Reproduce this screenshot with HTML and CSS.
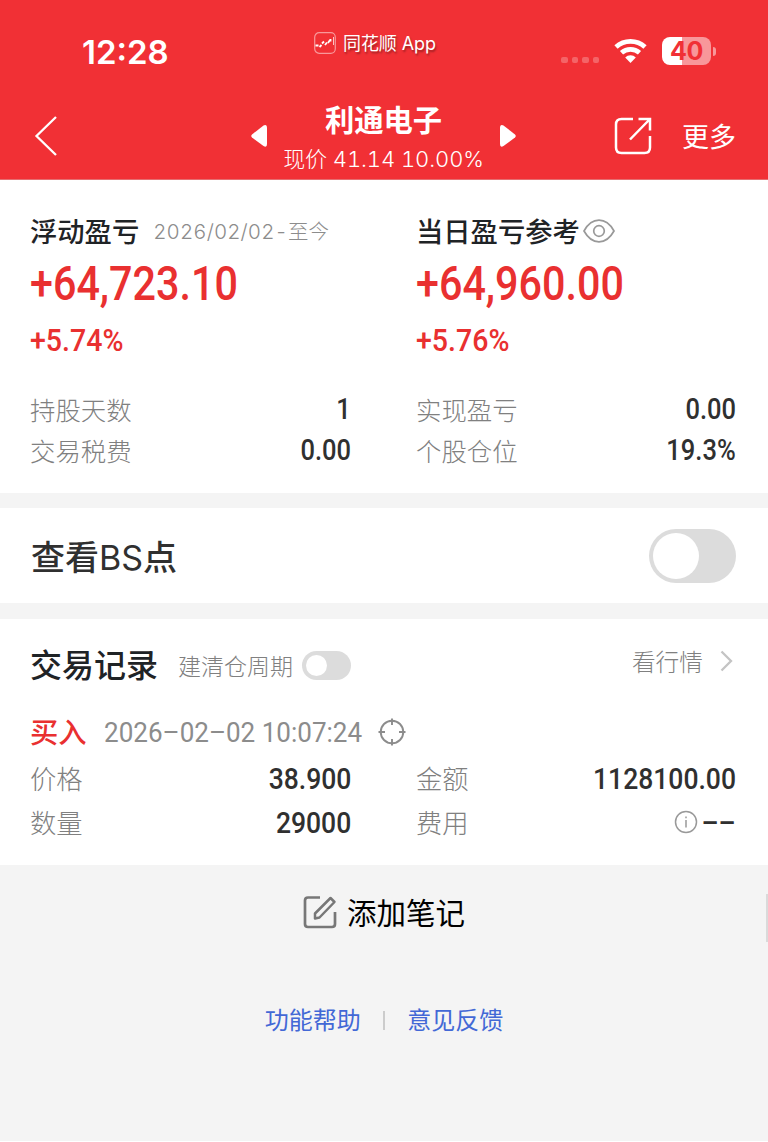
FILE: index.html
```html
<!DOCTYPE html>
<html lang="zh-CN">
<head>
  <meta charset="UTF-8">
  <meta name="viewport" content="width=device-width, initial-scale=1.0">
  <title>利通电子</title>
  <link rel="stylesheet" href="styles.css">
</head>
<body>
  <header class="header">
    <div class="status-bar">
      <span class="time">12:28</span>
      <div class="app-tag">
        <svg class="app-logo" width="22" height="22" viewBox="0 0 22 22" fill="none">
          <rect x="0.7" y="0.7" width="20.6" height="20.6" rx="4.5" stroke="#fff" stroke-opacity="0.5" stroke-width="1.2"/>
          <path d="M1.5 13.5h3M5.5 15l2-2M8 11.5l2-2M11 13l2-2.5M14 11l2-3M16.5 9.5V7" stroke="#fff" stroke-width="1.8"/>
          <path d="M19.5 5v8" stroke="#fff" stroke-opacity="0.7"/>
        </svg>
        <span>同花顺 App</span>
      </div>
      <div class="status-icons">
        <div class="signal"><i></i><i></i><i></i><i></i></div>
        <svg class="wifi" width="33" height="26" viewBox="0 0 33 26" fill="none" stroke="#fff" stroke-width="4.8">
          <path d="M2 10a21.5 21.5 0 0 1 29 0"/>
          <path d="M7.5 15.700a13.600 13.600 0 0 1 18 0"/>
          <path d="M16.500 26l-5.300-5.500a7.500 7.500 0 0 1 10.600 0z" fill="#fff" stroke="none"/>
        </svg>
        <div class="battery"><span>40</span></div>
      </div>
    </div>
    <nav class="nav">
      <svg class="back" width="24" height="42" viewBox="0 0 24 42" fill="none" stroke="#fff" stroke-width="2.3">
        <path d="M22 2L2.5 21L22 40"/>
      </svg>
      <div class="stock">
        <svg width="17" height="24" viewBox="0 0 17 24" fill="#fff">
          <path d="M1 10.5L12.5 1.5Q16 0 16 4V20Q16 24 12.5 22L1 13.5Q-0.5 12 1 10.5z"/>
        </svg>
        <div class="stock-info">
          <h1>利通电子</h1>
          <p>现价 41.14 10.00%</p>
        </div>
        <svg width="17" height="24" viewBox="0 0 17 24" fill="#fff">
          <path d="M16 10.5L4.500 1.500Q1 0 1 4V20Q1 24 4.500 22L16 13.500Q17.500 12 16 10.500z"/>
        </svg>
      </div>
      <svg class="share" width="38" height="38" viewBox="0 0 38 38" fill="none" stroke="#fff" stroke-width="2.5">
        <path d="M19 2H7.500Q2 2 2 7.500V30.500Q2 36 7.500 36H30.500Q36 36 36 30.500V19"/>
        <path d="M24.500 2H36V13.500M36 2L16 22.500"/>
      </svg>
      <span class="more">更多</span>
    </nav>
  </header>

  <section class="card summary">
    <div class="col">
      <div class="title">浮动盈亏<span class="period">2026/02/02-至今</span></div>
      <div class="amount"><span class="din">+64,723.10</span></div>
      <div class="rate"><span class="din">+5.74%</span></div>
      <div class="row"><span class="label">持股天数</span><span class="value">1</span></div>
      <div class="row"><span class="label">交易税费</span><span class="value">0.00</span></div>
    </div>
    <div class="col">
      <div class="title">当日盈亏参考
        <svg class="eye" width="32" height="24" viewBox="0 0 32 24" fill="none" stroke="#999" stroke-width="1.7">
          <path d="M1 12Q7 1.200 16 1.200T31 12Q25 22.800 16 22.800T1 12z"/>
          <circle cx="16" cy="12" r="5.300"/>
        </svg>
      </div>
      <div class="amount"><span class="din">+64,960.00</span></div>
      <div class="rate"><span class="din">+5.76%</span></div>
      <div class="row"><span class="label">实现盈亏</span><span class="value">0.00</span></div>
      <div class="row"><span class="label">个股仓位</span><span class="value">19.3%</span></div>
    </div>
  </section>

  <section class="card bs">
    <h2>查看<span class="latin">BS</span>点</h2>
    <div class="switch"></div>
  </section>

  <section class="card records">
    <div class="records-head">
      <h2>交易记录</h2>
      <span class="cycle">建清仓周期</span>
      <div class="switch small"></div>
      <div class="quote">
        <span>看行情</span>
        <svg width="13" height="22" viewBox="0 0 13 22" fill="none" stroke="#c4c4c4" stroke-width="2.3">
          <path d="M1.500 1.500L11 11L1.500 20.500"/>
        </svg>
      </div>
    </div>
    <div class="trade">
      <span class="buy">买入</span>
      <span class="datetime">2026–02–02 10:07:24</span>
      <svg width="28" height="28" viewBox="0 0 28 28" fill="none" stroke="#8c8c8c" stroke-width="1.900">
        <circle cx="14" cy="14" r="11.300"/>
        <path d="M14 0.500V7M14 21V27.500M0.500 14H7M21 14H27.500"/>
      </svg>
    </div>
    <div class="details">
      <div class="row"><span class="label">价格</span><span class="value">38.900</span></div>
      <div class="row"><span class="label">金额</span><span class="value">1128100.00</span></div>
      <div class="row"><span class="label">数量</span><span class="value">29000</span></div>
      <div class="row">
        <span class="label">费用</span>
        <svg class="info" width="24" height="24" viewBox="0 0 24 24" fill="none" stroke="#999" stroke-width="1.500">
          <circle cx="12" cy="12" r="10.500"/>
          <path d="M12 10V17.500M12 6.500V8.300"/>
        </svg>
        <span class="value">––</span>
      </div>
    </div>
  </section>

  <div class="note">
    <svg width="34" height="34" viewBox="0 0 34 34" fill="none" stroke="#777" stroke-width="2.700">
      <path d="M17 2.500H5Q2 2.500 2 5.500V29Q2 32 5 32H29Q32 32 32 29V17"/>
      <path d="M12 23.500V18.500L27.500 3L31.500 7L16.500 22.500z" stroke-linejoin="round" stroke-width="2.500"/>
    </svg>
    <span>添加笔记</span>
  </div>

  <footer class="links">
    <a>功能帮助</a>
    <i></i>
    <a>意见反馈</a>
  </footer>

  <div class="scrollbar"></div>
</body>
</html>
```

FILE: styles.css
```css
/* Global Styles */
* {
  box-sizing: border-box;
  margin: 0;
  padding: 0;
}

body {
  width: 768px;
  height: 1141px;
  font-family: Inter, 'Noto Sans CJK SC', sans-serif;
  background: linear-gradient(#f4f4f4, #f4f4f4) 0 0 / 100% 1141px no-repeat #fff;
  color: #303030;
  white-space: nowrap;
  overflow: hidden;
}

svg {
  display: block;
  flex: none;
}

h1,
h2 {
  font-weight: 500;
}

/* Header */
.header {
  height: 180px;
  background-color: #f13035;
  border-bottom: 1px solid #e56e70;
  color: #fff;
}

.status-bar {
  display: flex;
  height: 92px;
  padding-left: 82px;
}

.time {
  width: 232px;
  padding-top: 32px;
  font-size: 33px;
  font-weight: 600;
  line-height: 40px;
}

.app-tag {
  display: flex;
  width: 247px;
  padding-top: 32px;
  gap: 7px;
  font-size: 18px;
  line-height: 24px;
  letter-spacing: -0.1px;
  text-shadow: 1px 2px 2px rgba(0, 0, 0, 0.35);
}

.status-icons {
  display: flex;
  padding-top: 37px;
}

.signal {
  display: flex;
  gap: 4px;
  padding-top: 20px;
  width: 53px;
}

.signal i {
  width: 6.5px;
  height: 6px;
  border-radius: 2px;
  background-color: rgba(255, 255, 255, 0.25);
}

.battery {
  position: relative;
  width: 49px;
  height: 28px;
  margin-left: 15px;
  border-radius: 8px;
  background: linear-gradient(90deg, #fff 20px, #f8979a 20px);
  color: #f13035;
  font-size: 25px;
  font-weight: 700;
  line-height: 29px;
  letter-spacing: -0.5px;
  text-align: center;
}

.battery::after {
  content: '';
  position: absolute;
  top: 10px;
  right: -5px;
  width: 3px;
  height: 9px;
  border-radius: 0 4px 4px 0;
  background-color: #f8979a;
}

.nav {
  display: flex;
  align-items: center;
  height: 87px;
  padding-left: 34px;
}

.stock {
  display: flex;
  justify-content: space-between;
  align-items: center;
  width: 265px;
  margin-left: 193px;
}

.stock-info {
  padding-top: 6px;
  text-align: center;
}

.stock-info h1 {
  font-size: 29.3px;
  font-weight: 700;
  line-height: 40px;
}

.stock-info p {
  font-size: 22px;
  font-weight: 300;
  font-variant-numeric: tabular-nums;
  line-height: 36px;
  letter-spacing: -0.1px;
}

.share {
  margin-left: 98px;
}

.more {
  margin-left: 30px;
  font-size: 27px;
}

/* White cards */
.card {
  background-color: #fff;
  padding: 0 32px 0 30px;
}

.summary {
  display: grid;
  grid-template-columns: 321px 320px;
  column-gap: 65px;
  height: 313px;
  padding-top: 30px;
}

.title {
  display: flex;
  align-items: center;
  height: 40px;
  font-size: 27.3px;
  font-weight: 500;
  color: #1f2326;
}

.period {
  margin-left: 14px;
  font-size: 20.5px;
  font-weight: 300;
  font-variant-numeric: tabular-nums;
  color: #8c8c8c;
  letter-spacing: 0.1px;
}

.eye {
  margin: 2px 0 0 3px;
}

/* Condensed digits */
.din,
.value,
.datetime {
  display: inline-block;
  font-family: Roboto, sans-serif;
  font-weight: 500;
}

.din {
  transform: scaleX(0.86);
  transform-origin: left;
}

.amount {
  height: 64px;
  margin-top: 1px;
  font-size: 48px;
  line-height: 64px;
  color: #e93030;
}

.rate {
  height: 48px;
  margin-bottom: 25px;
  font-size: 31px;
  line-height: 50px;
  color: #e93030;
}

.rate .din {
  transform: scaleX(0.92);
}

.row {
  display: flex;
  align-items: center;
  height: 41.5px;
}

.label {
  flex: 1;
  font-size: 25.4px;
  font-weight: 300;
  color: #808080;
}

.value {
  font-size: 29.3px;
  transform: scaleX(0.87);
  transform-origin: right;
}

/* Switches */
.bs {
  display: flex;
  justify-content: space-between;
  align-items: center;
  height: 95px;
  margin-top: 15px;
}

.bs h2 {
  padding-left: 1px;
  font-size: 34px;
}

.latin {
  font-weight: 400;
}

.switch {
  width: 87px;
  height: 54px;
  padding: 4px;
  border-radius: 27px;
  background-color: #dcdcdc;
}

.switch::before {
  content: '';
  display: block;
  width: 46px;
  height: 46px;
  border-radius: 50%;
  background-color: #fff;
}

.switch.small {
  width: 49px;
  height: 29px;
}

.switch.small::before {
  width: 21px;
  height: 21px;
}

/* Trade records */
.records {
  height: 246px;
  margin-top: 16px;
  padding-top: 22px;
}

.records-head {
  display: flex;
  align-items: center;
  height: 48px;
}

.records-head h2 {
  margin-bottom: 4px;
  font-size: 32px;
  color: #1f2326;
}

.cycle {
  margin: 0 9px 0 20px;
  font-size: 23px;
  font-weight: 300;
  color: #808080;
}

.quote {
  display: flex;
  align-items: center;
  gap: 17px;
  margin: 0 3px 8px auto;
  font-size: 23.7px;
  font-weight: 300;
  color: #808080;
}

.trade {
  display: flex;
  align-items: center;
  height: 46px;
  margin: 20px 0 2px;
}

.buy {
  width: 74px;
  padding-bottom: 3px;
  font-size: 28.3px;
  font-weight: 500;
  color: #e93030;
}

.datetime {
  width: 274px;
  font-size: 28px;
  font-weight: 400;
  color: #8c8c8c;
  transform: scaleX(0.93);
  transform-origin: left;
}

.details {
  display: grid;
  grid-template-columns: 321px 320px;
  column-gap: 65px;
}

.details .row {
  height: 43.5px;
}

.details .label {
  padding-bottom: 2px;
  font-size: 26.3px;
}

.details .value {
  padding-top: 1px;
  transform: scaleX(0.905);
}

/* Footer */
.note {
  display: flex;
  justify-content: center;
  align-items: center;
  gap: 10px;
  height: 94px;
  font-size: 29.5px;
  color: #000;
}

.note span {
  padding-bottom: 3px;
}

.links {
  display: flex;
  justify-content: center;
  align-items: center;
  gap: 22.5px;
  margin-top: 42px;
  font-size: 24px;
  color: #4268d6;
}

.links i {
  width: 1.5px;
  height: 19px;
  margin-top: 3px;
  background-color: #ccc;
}

.scrollbar {
  position: absolute;
  top: 894px;
  right: 0;
  width: 2px;
  height: 48px;
  background-color: #dadada;
}
```
